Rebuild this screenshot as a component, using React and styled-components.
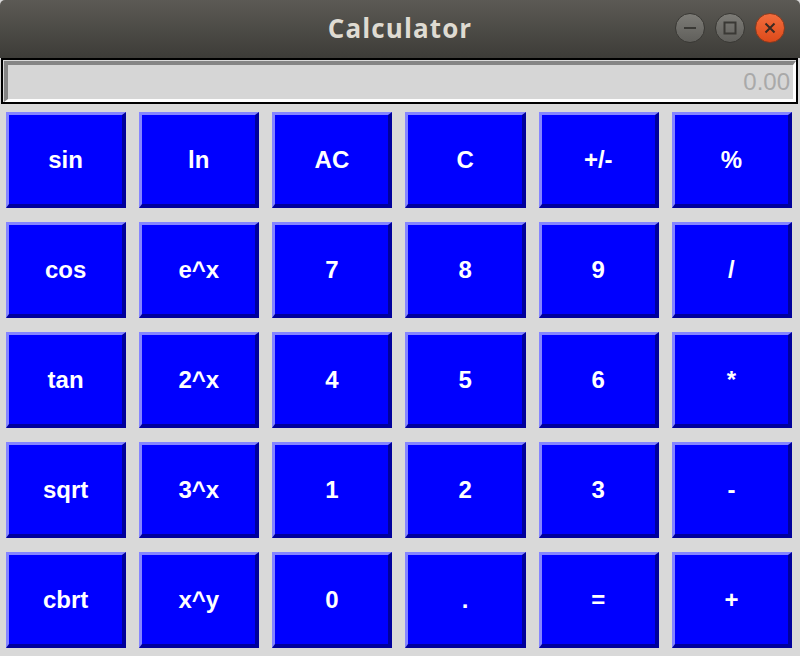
import React from "react";
import styled, { createGlobalStyle } from "styled-components";

const Global = createGlobalStyle`
  html, body { margin: 0; padding: 0; background: #d9d9d9; }
  body { width: 800px; height: 656px; overflow: hidden; }
  * { box-sizing: border-box; }
`;

const Window = styled.div`
  width: 800px;
  height: 656px;
  display: flex;
  flex-direction: column;
  background: #d9d9d9;
`;

const TitleBar = styled.div`
  height: 58px;
  flex: none;
  position: relative;
  display: flex;
  align-items: center;
  justify-content: center;
  background: linear-gradient(#5c5a55, #3d3c38);
  border-radius: 5px 5px 0 0;
`;

const Title = styled.div`
  font-family: "Open Sans", "Noto Sans", sans-serif;
  font-weight: 700;
  font-size: 26px;
  color: #dfdbd2;
  letter-spacing: 1.1px;
  margin-top: -3px;
`;

const Controls = styled.div`
  position: absolute;
  right: 15px;
  top: 13px;
  display: flex;
  gap: 10px;
`;

const Ctrl = styled.div`
  width: 30px;
  height: 30px;
  border-radius: 50%;
  display: flex;
  align-items: center;
  justify-content: center;
  border: 1px solid ${(p) => (p.$close ? "#8a3a1e" : "#393834")};
  background: ${(p) =>
    p.$close
      ? "linear-gradient(#f26d3d, #dd4a1a)"
      : "linear-gradient(#7d7c77, #605f5b)"};
`;

const DisplayWrap = styled.div`
  flex: none;
  height: 48px;
  padding: 0 2px 2px 1px;
`;

const DisplayFrame = styled.div`
  height: 100%;
  border: 2px solid #000;
  padding: 1px 0 0 1px;
  background: #d9d9d9;
`;

const Field = styled.div`
  height: 100%;
  border-top: 4px solid #858585;
  border-left: 4px solid #858585;
  border-bottom: 3px solid #ffffff;
  border-right: 3px solid #ffffff;
  background: #d6d6d6;
  display: flex;
  align-items: center;
  justify-content: flex-end;
  padding-right: 3px;
  font-family: "Liberation Sans", Arial, sans-serif;
  font-size: 24px;
  line-height: 32px;
  color: #a9a9a9;
`;

const Pad = styled.div`
  flex: 1;
  display: grid;
  grid-template-columns: repeat(6, 1fr);
  grid-template-rows: repeat(5, 96px);
  column-gap: 13px;
  row-gap: 14px;
  padding: 6px 8px 8px 6px;
`;

const Key = styled.div`
  background: #0000ff;
  border-style: solid;
  border-width: 3px 4px 4px 3px;
  border-color: #8585ff #00009c #00009c #8585ff;
  display: flex;
  align-items: center;
  justify-content: center;
  color: #ffffff;
  font-family: "Liberation Sans", Arial, sans-serif;
  font-weight: 700;
  font-size: 24px;
`;

const keys = [
  "sin", "ln", "AC", "C", "+/-", "%",
  "cos", "e^x", "7", "8", "9", "/",
  "tan", "2^x", "4", "5", "6", "*",
  "sqrt", "3^x", "1", "2", "3", "-",
  "cbrt", "x^y", "0", ".", "=", "+",
];

export default function App() {
  return (
    <Window>
      <Global />
      <TitleBar>
        <Title>Calculator</Title>
        <Controls>
          <Ctrl>
            <svg width="16" height="16" viewBox="0 0 16 16">
              <rect x="2" y="7" width="12" height="2" fill="#3a3935" />
            </svg>
          </Ctrl>
          <Ctrl>
            <svg width="16" height="16" viewBox="0 0 16 16">
              <rect x="2.5" y="2.5" width="11" height="11" fill="none" stroke="#3a3935" strokeWidth="2" />
            </svg>
          </Ctrl>
          <Ctrl $close>
            <svg width="16" height="16" viewBox="0 0 16 16">
              <path d="M3.5 3.5 L12.5 12.5 M12.5 3.5 L3.5 12.5" stroke="#3a2a22" strokeWidth="2" />
            </svg>
          </Ctrl>
        </Controls>
      </TitleBar>
      <DisplayWrap>
        <DisplayFrame>
          <Field>0.00</Field>
        </DisplayFrame>
      </DisplayWrap>
      <Pad>
        {keys.map((k) => (
          <Key key={k}>{k}</Key>
        ))}
      </Pad>
    </Window>
  );
}
